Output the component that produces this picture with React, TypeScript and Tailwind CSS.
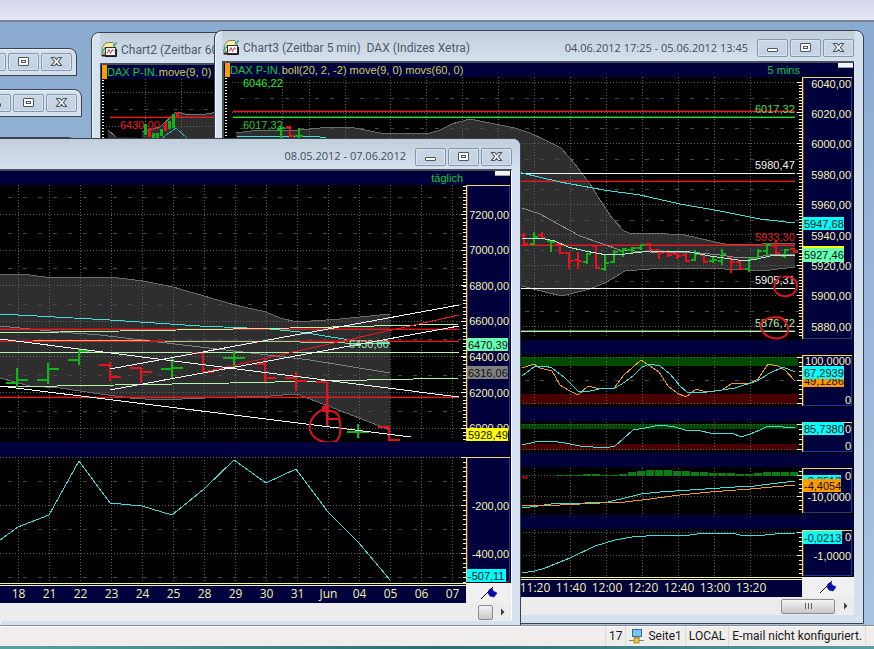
import React from "react";

type Pt = [number, number];
type Bar = { x: number; hi: number; lo: number; open: number; close: number; up?: boolean };
type Label = { y: number; text: string };
type Badge = { y: number; h: number; w: number; fill: string; text: string; ty?: number };

const GREEN = "#10b414";
const RED = "#e8121c";
const CYAN = "#3ee0dc";
const PALE = "#b4f5ac";
const ORANGE = "#f09a2c";
const LEVEL_RED = "#e81820";

const pts = (list: Pt[]) => list.map((p) => p.join(",")).join(" ");
const steps = (from: number, to: number, step: number) => {
  const out: number[] = [];
  for (let v = from; v <= to; v += step) out.push(v);
  return out;
};

function Curve({ data, color, width = 1 }: { data: Pt[]; color: string; width?: number }) {
  return <polyline points={pts(data)} fill="none" stroke={color} strokeWidth={width} shapeRendering="crispEdges" />;
}

/* A level line: one solid row with a faint tint on the row above it. */
function HLine({ y, x1, x2, color }: { y: number; x1: number; x2: number; color: string }) {
  return (
    <g fill={color} shapeRendering="crispEdges">
      <rect x={x1} y={y - 1} width={x2 - x1} height={1} opacity={0.4} />
      <rect x={x1} y={y} width={x2 - x1} height={1} />
    </g>
  );
}

function Grid({ cols, rows, mids = [], x1, x2, y1, y2 }: { cols: number[]; rows: number[]; mids?: number[]; x1: number; x2: number; y1: number; y2: number }) {
  return (
    <g shapeRendering="crispEdges" fill="none">
      {cols.map((x) => (
        <line key={`c${x}`} x1={x + 0.5} x2={x + 0.5} y1={y1} y2={y2} stroke="#606060" strokeDasharray="1 2" />
      ))}
      {rows.map((y) => (
        <line key={`r${y}`} x1={x1} x2={x2} y1={Math.round(y) + 0.5} y2={Math.round(y) + 0.5} stroke="#606060" strokeDasharray="1 2" />
      ))}
      {mids.map((y) => (
        <line key={`m${y}`} x1={x1 + 8} x2={x2} y1={Math.round(y) + 0.5} y2={Math.round(y) + 0.5} stroke="#484848" strokeDasharray="4 11" />
      ))}
    </g>
  );
}

function Ohlc({ bars, arm, width }: { bars: Bar[]; arm: number; width: number }) {
  return (
    <g shapeRendering="crispEdges" fill="none" strokeWidth={width}>
      {bars.map((b) => (
        <path
          key={b.x}
          stroke={b.up ? GREEN : RED}
          d={`M${b.x} ${b.hi}V${b.lo}M${b.x - arm} ${b.open}H${b.x}M${b.x} ${b.close}H${b.x + arm}`}
        />
      ))}
    </g>
  );
}

function Price({ x, y, text, color }: { x: number; y: number; text: string; color: string }) {
  return (
    <text x={x} y={y} fill={color} className="font-['Liberation_Sans',sans-serif] text-[11px]">
      {text}
    </text>
  );
}

function Scale({ x, w, top, bottom, ticks, major, labels, badges = [] }: { x: number; w: number; top: number; bottom: number; ticks: number[]; major: number[]; labels: Label[]; badges?: Badge[] }) {
  return (
    <g>
      <rect x={x} y={top} width={w} height={bottom - top} fill="#00003c" />
      <g fill="#f4f4f4" shapeRendering="crispEdges">
        {ticks.map((t) => (
          <rect key={t} x={x - 3} y={Math.round(t)} width={3} height={1} />
        ))}
        {major.map((t) => (
          <rect key={`M${t}`} x={x - 5} y={Math.round(t)} width={5} height={1} />
        ))}
      </g>
      <rect x={x} y={top} width={1} height={bottom - top} fill="#f4d878" />
      <rect x={x + 1} y={top} width={1} height={bottom - top} fill="#504020" />
      <rect x={x} y={top} width={w - 1} height={1} fill="#f4d878" />
      <path d={`M${x + 1} ${bottom - 0.5}H${x + w - 1.5}V${top + 1}`} fill="none" stroke="#1c3a9c" />
      {labels.map((l) => (
        <text key={l.text + l.y} x={x + w - 2} y={l.y + 4} textAnchor="end" fill="#f8f8b0" className="font-['Liberation_Sans',sans-serif] text-[11px]">
          {l.text}
        </text>
      ))}
      {badges.map((b) => (
        <g key={b.text + b.y}>
          <rect x={x + 1} y={b.y} width={b.w} height={b.h} fill={b.fill} />
          <text x={x + 2} y={b.ty ?? b.y + 11} fill="#101010" className="font-['Liberation_Sans',sans-serif] text-[11px]">
            {b.text}
          </text>
        </g>
      ))}
    </g>
  );
}

function Glyph({ kind }: { kind: "min" | "restore" | "close" }) {
  return (
    <svg width="14" height="12" viewBox="0 0 14 12" aria-hidden="true">
      {kind === "min" && <rect x="1.5" y="6.5" width="10" height="3" rx="0.5" fill="#fff" stroke="#4b5563" />}
      {kind === "restore" && (
        <g stroke="#4b5563" fill="#fff">
          <rect x="1.5" y="1.5" width="10" height="8" rx="0.5" />
          <rect x="4.5" y="4.5" width="4" height="2" />
        </g>
      )}
      {kind === "close" && (
        <path d="M1.500 1.500h3.200L6.500 3.600l1.800-2.100H11.500L8.400 5.500 11.500 9.500H8.300L6.500 7.400 4.700 9.500H1.500L4.600 5.500z" fill="#fff" stroke="#4b5563" strokeWidth="1.100" />
      )}
    </svg>
  );
}

function WinButtons() {
  const item = "flex h-[18px] w-[31px] items-center justify-center rounded-[2px] border border-[#8496b0] bg-linear-to-b from-[#c9d6e4] to-[#c3d1e2] shadow-[inset_0_0_0_1px_#d8e3ee]";
  return (
    <div className="flex shrink-0 gap-[2px]">
      <button type="button" aria-label="Minimieren" className={item}><Glyph kind="min" /></button>
      <button type="button" aria-label="Wiederherstellen" className={item}><Glyph kind="restore" /></button>
      <button type="button" aria-label="Schließen" className={item}><Glyph kind="close" /></button>
    </div>
  );
}

function ChartIcon() {
  return (
    <svg width="16" height="16" viewBox="0 0 16 16" aria-hidden="true" className="shrink-0">
      <path d="M1 6L4 1.500L7 0.500h5l2 3-2 3-7 4-3 1z" fill="#f4f0a0" stroke="#686838" strokeWidth="0.800" />
      <path d="M0 11l4-5 2 2M12 4l4-3.500" fill="none" stroke="#28a8a0" strokeWidth="1.500" />
      <path d="M0 12.500h5v2H1z" fill="#202020" />
      <rect x="4.500" y="5.500" width="10" height="8" fill="#fff" stroke="#303030" />
      <path d="M6 11.500l2-4 1.500 4 2-4 1.500 2" fill="none" stroke="#d04040" />
      <path d="M4 14.500h11.500V7" fill="none" stroke="#181818" />
    </svg>
  );
}

function Pushpin() {
  return (
    <svg width="18" height="14" viewBox="0 0 18 14" aria-hidden="true">
      <path d="M1 13L13 1" stroke="#101010" fill="none" />
      <path d="M9 4l3-2 1 3 4 2-3 4-4-1-2-3z" fill="#0808b8" stroke="#000060" strokeWidth="0.600" />
    </svg>
  );
}

const frame = "absolute flex flex-col overflow-hidden border border-[#39424e] bg-[#d5e1ee] shadow-[inset_1px_1px_0_#eef4fa]";
const titleText = "whitespace-pre font-['Roboto',sans-serif] text-[12px] text-[#4b5a6b]";
const rangeText = "whitespace-pre font-['Open_Sans',sans-serif] text-[11px] text-[#3f4d5e]";

function PaneHeader({ symbol, formula, period, periodGap = "" }: { symbol?: string; formula?: string; period?: string; periodGap?: string }) {
  return (
    <div className="flex h-[14px] items-center bg-[#00003c] font-['Liberation_Sans',sans-serif] text-[11px] leading-[14px] whitespace-pre">
      {symbol && <span className="ml-px h-[14px] w-[5px] shrink-0 bg-[#ff9a00]" />}
      {symbol && <span className="text-[#14c83c]">{symbol}</span>}
      {formula && <span className="ml-px text-[#d0d058]">{formula}</span>}
      {period && (
        <div className="ml-auto flex items-start">
          <span className="text-[#14c83c]">{period}</span>
          <span className={`mr-px h-[5px] w-[15px] border-b border-[#a0a0a0] bg-[#f4f4f4] ${periodGap}`} />
        </div>
      )}
    </div>
  );
}

function TimeAxis({ labels, first, step, axisWidth }: { labels: string[]; first: string; step: string; axisWidth: string }) {
  return (
    <div className="flex h-5 bg-[#f0f0f0]">
      <div className="flex flex-1 flex-col overflow-hidden bg-[#00003c]">
        <div className="h-[3px] shrink-0 border-y border-[#f4f4a0] bg-black" />
        <div className={`flex ${first}`}>
          {labels.map((l) => (
            <span key={l} className={`shrink-0 text-center font-['Open_Sans',sans-serif] text-[12px] leading-[16px] text-[#f4f4b0] ${step}`}>{l}</span>
          ))}
        </div>
      </div>
      <div className={`flex items-center justify-center ${axisWidth}`}><Pushpin /></div>
    </div>
  );
}

function MiniWindow({ place }: { place: string }) {
  return (
    <section className={`${frame} h-[28px] items-end justify-center rounded-tr-lg pr-1 ${place}`}>
      <WinButtons />
    </section>
  );
}

/* ---------- hourly chart ---------- */

function HourlyWindow() {
  const candles: [number, number, number, boolean][] = [
    [144, 124, 135, true], [148, 128, 137, false], [152, 133, 138, true], [156, 133, 138, true], [160, 129, 136, true],
    [164, 122, 131, false], [168, 121, 129, true], [172, 114, 128, true], [176, 112, 117, false],
  ];
  return (
    <section className={`${frame} top-[10px] left-[91px] h-[200px] w-[300px] rounded-t-lg px-2`}>
      <header className="flex h-[30px] shrink-0 items-center gap-1 bg-linear-to-b from-[#c3cedb] to-[#d5e1ee] pt-1 pl-px">
        <ChartIcon />
        <h2 className={titleText}>Chart2 (Zeitbar 60 min)</h2>
      </header>
      <div className="border-t-2 border-l border-[#4a5058]">
        <PaneHeader symbol="DAX P-IN." formula="move(9, 0) movs(60, 0)" />
        <svg width="281" height="100" viewBox="101 79 281 100" className="block bg-black">
          <polygon points="108,130 116,137 142,138 142,132 160,127 176,112 190,115 206,114 230,110 230,160 108,160" fill="#2e2e2e" />
          <Grid cols={[145, 181]} rows={[92, 126]} mids={[109]} x1={106} x2={384} y1={79} y2={179} />
          <Curve data={[[108, 130], [116, 137]]} color="#777" />
          <Curve data={[[142, 132], [160, 127], [176, 112], [190, 115], [206, 114], [230, 110]]} color="#777" />
          <HLine y={117} x1={110} x2={384} color={LEVEL_RED} />
          <Price x={120} y={129} text="6430,00" color={LEVEL_RED} />
          <Curve data={[[162, 138], [176, 128], [187, 138]]} color="#2a9aa0" />
          {candles.map(([x, a, b, up]) => (
            <rect key={x} x={x} y={a} width={3} height={b - a} fill={up ? GREEN : RED} />
          ))}
          {steps(80, 178, 3).map((y) => <rect key={y} x={102} y={y} width={2} height={1} fill="#fff" />)}
        </svg>
      </div>
    </section>
  );
}

/* ---------- 5 minute chart ---------- */

const xCols = [282, 309, 345, 390, 426, 462, 498, 534, 570, 606, 642, 678, 714, 750];

const minuteUpper: Pt[] = [[236, 133], [258, 130], [300, 130], [330, 127], [350, 127], [380, 133], [430, 133], [440, 130], [452, 124], [470, 119], [490, 123], [515, 128], [530, 133], [545, 140], [561, 148], [575, 164], [590, 184], [600, 200], [612, 218], [624, 231], [632, 234], [650, 233], [685, 235], [715, 242], [730, 245], [795, 243]];
const minuteLower: Pt[] = [[795, 267], [770, 270], [750, 270], [700, 268], [650, 269], [625, 271], [607, 282], [590, 289], [562, 296], [545, 292], [522, 286], [236, 250]];

const minuteBars: Bar[] = [
  { x: 524, hi: 233, lo: 245, open: 235, close: 244 },
  { x: 534, hi: 232, lo: 245, open: 244, close: 237, up: true },
  { x: 542, hi: 232, lo: 239, open: 235, close: 238 },
  { x: 551, hi: 240, lo: 252, open: 241, close: 242, up: true },
  { x: 560, hi: 243, lo: 254, open: 244, close: 253 },
  { x: 569, hi: 252, lo: 269, open: 253, close: 261 },
  { x: 578, hi: 252, lo: 269, open: 260, close: 261 },
  { x: 587, hi: 253, lo: 264, open: 262, close: 254, up: true },
  { x: 596, hi: 245, lo: 269, open: 246, close: 268 },
  { x: 605, hi: 255, lo: 271, open: 269, close: 263, up: true },
  { x: 614, hi: 250, lo: 263, open: 262, close: 252, up: true },
  { x: 623, hi: 248, lo: 257, open: 251, close: 249, up: true },
  { x: 632, hi: 247, lo: 254, open: 250, close: 248, up: true },
  { x: 641, hi: 244, lo: 250, open: 248, close: 245, up: true },
  { x: 650, hi: 243, lo: 251, open: 244, close: 250 },
  { x: 659, hi: 249, lo: 259, open: 250, close: 253 },
  { x: 668, hi: 250, lo: 257, open: 252, close: 255 },
  { x: 677, hi: 252, lo: 259, open: 254, close: 256 },
  { x: 686, hi: 253, lo: 262, open: 255, close: 261 },
  { x: 695, hi: 250, lo: 261, open: 260, close: 254, up: true },
  { x: 704, hi: 254, lo: 263, open: 255, close: 262 },
  { x: 713, hi: 256, lo: 263, open: 261, close: 260, up: true },
  { x: 722, hi: 249, lo: 265, open: 261, close: 254, up: true },
  { x: 731, hi: 257, lo: 273, open: 258, close: 262 },
  { x: 740, hi: 260, lo: 270, open: 262, close: 269 },
  { x: 749, hi: 257, lo: 272, open: 269, close: 259, up: true },
  { x: 758, hi: 249, lo: 259, open: 258, close: 251, up: true },
  { x: 767, hi: 243, lo: 257, open: 251, close: 245, up: true },
  { x: 776, hi: 240, lo: 254, open: 246, close: 253 },
  { x: 785, hi: 249, lo: 258, open: 256, close: 250, up: true },
  { x: 794, hi: 248, lo: 253, open: 249, close: 252 },
];

const histogram = [475, 475, 475, 474, 474, 475, 475, 474, 472, 471, 470, 470, 470, 471, 471, 472, 472, 473, 473, 473, 474, 474, 473, 472, 472, 472, 472];

function Gap() {
  return <div className="h-[14px] bg-[#00003c]" />;
}

function MinuteWindow() {
  return (
    <section className={`${frame} top-[8px] left-[214px] h-[594px] w-[650px] rounded-t-lg pr-2 pl-[7px]`}>
      <header className="flex h-[30px] shrink-0 items-center bg-linear-to-b from-[#c3cedb] to-[#d5e1ee] px-px pt-1">
        <ChartIcon />
        <h2 className={`ml-1 ${titleText}`}>Chart3 (Zeitbar 5 min)  DAX (Indizes Xetra)</h2>
        <span className={`mr-[9px] ml-auto ${rangeText}`}>04.06.2012 17:25 - 05.06.2012 13:45</span>
        <WinButtons />
      </header>
      <div className="mr-px border-t-2 border-l-2 border-[#4a5058]">
        <PaneHeader symbol="DAX P-IN." formula="boll(20, 2, -2) move(9, 0) movs(60, 0)" period="5 mins" periodGap="ml-[38px]" />
        <svg viewBox="224 77 630 263" className="block w-full bg-black">
          <polygon points={pts([...minuteUpper, ...minuteLower])} fill="#2e2e2e" />
          <Grid cols={xCols} rows={steps(82, 330, 30.45)} mids={steps(98, 330, 30.45)} x1={232} x2={800} y1={77} y2={338} />
          <Curve data={minuteUpper} color="#6c6c6c" />
          <Curve data={minuteLower} color="#6c6c6c" />
          <HLine y={111} x1={233} x2={795} color={LEVEL_RED} />
          <HLine y={117} x1={233} x2={795} color="#28e032" />
          <rect x={233} y={173} width={562} height={1} fill="#f4f4f4" />
          <HLine y={181} x1={233} x2={795} color={LEVEL_RED} />
          <HLine y={245} x1={233} x2={795} color={LEVEL_RED} />
          <rect x={233} y={288} width={562} height={1} fill="#ffffff" />
          <HLine y={331} x1={233} x2={795} color={PALE} />
          <Curve data={[[236, 136], [320, 137], [522, 173], [560, 182], [604, 190], [640, 195], [680, 204], [720, 211], [760, 219], [795, 223]]} color={CYAN} />
          <Curve data={[[522, 208], [540, 214], [560, 225], [580, 236], [600, 243], [620, 250], [650, 252], [690, 252], [720, 255], [740, 258], [757, 257], [775, 254], [795, 254]]} color="#8c8c8c" />
          <Ohlc bars={minuteBars} arm={4} width={2} />
          <Curve data={[[522, 239], [540, 238], [555, 241], [568, 247], [585, 251], [607, 255], [625, 254], [650, 251], [690, 252], [710, 256], [745, 261], [757, 259], [770, 256], [795, 255]]} color="#a8f0d0" />
          <Ohlc bars={[{ x: 281, hi: 126, lo: 138, open: 130, close: 128, up: true }, { x: 290, hi: 126, lo: 137, open: 127, close: 136 }, { x: 299, hi: 128, lo: 138, open: 136, close: 136, up: true }]} arm={4} width={2} />
          <Price x={243} y={87} text="6046,22" color="#28e832" />
          <Price x={243} y={129} text="6017,32" color="#28c832" />
          <Price x={755} y={113} text="6017,32" color="#5cdc50" />
          <Price x={755} y={169} text="5980,47" color="#f4f4f4" />
          <Price x={755} y={241} text="5933,30" color={LEVEL_RED} />
          <Price x={755} y={284} text="5905,31" color="#f4f4f4" />
          <Price x={755} y={327} text="5876,72" color={PALE} />
          <path d="M781 276C775 280 771 289 778 294C785 299 797 295 797 286C797 279 790 275 783 277" fill="none" stroke="#e01420" strokeWidth="2" />
          <path d="M784 319C774 315 758 319 761 328C764 338 778 341 785 336C791 331 788 320 778 317" fill="none" stroke="#e01420" strokeWidth="2" />
          {steps(78, 336, 3).map((y) => <rect key={y} x={225} y={y} width={2} height={1} fill="#fff" />)}
          <Scale
            x={802} w={51} top={77} bottom={339}
            ticks={steps(82, 336, 3.045)} major={steps(82, 330, 30.45)}
            labels={["6040,00", "6020,00", "6000,00", "5980,00", "5960,00", "5940,00", "5920,00", "5900,00", "5880,00"].map((text, i) => ({ text, y: Math.round(83.5 + i * 30.4) }))}
            badges={[
              { y: 217, h: 13, w: 41, fill: "#00ffff", text: "5947,68" },
              { y: 246, h: 3, w: 41, fill: "#ffff00", text: "" },
              { y: 248, h: 14, w: 41, fill: "#66ffb2", text: "5927,46", ty: 259 },
            ]}
          />
        </svg>
        <Gap />
        <svg viewBox="224 354 630 53" className="block w-full bg-black">
          <rect x="224" y="357" width="574" height="9" fill="#004a00" />
          <rect x="224" y="394" width="574" height="10" fill="#4a0000" />
          <Grid cols={xCols} rows={[357, 403]} mids={[380]} x1={232} x2={800} y1={355} y2={406} />
          <Curve color={ORANGE} data={[[522, 368], [534, 364], [540, 368], [552, 371], [560, 385], [568, 390], [578, 395], [588, 386], [600, 389], [614, 388], [624, 375], [641, 360], [650, 366], [659, 372], [668, 386], [677, 393], [686, 397], [696, 389], [706, 392], [722, 390], [731, 384], [750, 383], [758, 379], [768, 364], [778, 366], [785, 370], [795, 381]]} />
          <Curve color={CYAN} data={[[522, 376], [534, 367], [545, 366], [552, 368], [565, 378], [578, 391], [590, 391], [604, 388], [615, 388], [625, 382], [633, 376], [642, 367], [650, 364], [660, 366], [670, 374], [680, 386], [687, 392], [700, 393], [722, 390], [735, 388], [757, 381], [770, 373], [783, 367], [795, 372]]} />
          <Scale x={802} w={51} top={355} bottom={406} ticks={steps(357, 404, 4.6)} major={[357, 380, 403]}
            labels={[{ y: 361, text: "100,0000" }, { y: 400, text: "0" }]}
            badges={[{ y: 376, h: 11, w: 41, fill: "#ff9a00", text: "49,1286", ty: 385 }, { y: 366, h: 13, w: 41, fill: "#00ffff", text: "67,2939" }]} />
        </svg>
        <Gap />
        <svg viewBox="224 421 630 32" className="block w-full bg-black">
          <rect x="224" y="424" width="574" height="5" fill="#004a00" />
          <rect x="224" y="444" width="574" height="6" fill="#4a0000" />
          <Grid cols={xCols} rows={[424, 449]} x1={232} x2={800} y1={422} y2={452} />
          <Curve color={CYAN} data={[[522, 445], [535, 442], [550, 441], [565, 443], [580, 446], [605, 448], [615, 446], [633, 430], [645, 428], [660, 425], [675, 427], [685, 430], [697, 430], [714, 434], [725, 433], [732, 433], [741, 437], [750, 434], [760, 430], [768, 426], [783, 427], [795, 428]]} />
          <Scale x={802} w={51} top={422} bottom={452} ticks={steps(424, 450, 5)} major={[424, 449]}
            labels={[{ y: 429, text: "0" }, { y: 446, text: "0" }]}
            badges={[{ y: 422, h: 13, w: 41, fill: "#00ffff", text: "85,7380" }]} />
        </svg>
        <Gap />
        <svg viewBox="224 467 630 48" className="block w-full bg-black">
          <Grid cols={xCols} rows={[475, 496]} x1={232} x2={800} y1={468} y2={514} />
          <rect x="522" y="476" width="6" height="3" fill="#7c0808" />
          {histogram.map((y, i) => (
            <rect key={i} x={556 + i * 9} y={y} width={8} height={476 - y} fill="#0c7c14" />
          ))}
          <Curve color={CYAN} data={[[522, 508], [538, 506], [557, 503], [580, 504], [590, 502], [605, 503], [612, 501], [625, 498], [641, 494], [660, 492], [690, 490], [735, 487], [755, 486], [770, 484], [795, 481]]} />
          <Curve color={ORANGE} data={[[522, 505], [560, 505], [600, 503], [625, 502], [650, 499], [680, 495], [710, 492], [750, 489], [795, 485]]} />
          <Scale x={802} w={51} top={468} bottom={513} ticks={steps(471, 512, 4.2)} major={[475, 496]}
            labels={[{ y: 476, text: "0" }, { y: 497, text: "-10,0000" }]}
            badges={[{ y: 475, h: 12, w: 38, fill: "#00ffff", text: "-3,8518", ty: 485 }, { y: 479, h: 13, w: 38, fill: "#ff9a00", text: "-4,4054", ty: 490 }]} />
        </svg>
        <Gap />
        <svg viewBox="224 529 630 48" className="block w-full bg-black">
          <Grid cols={xCols} rows={[532, 555]} x1={232} x2={800} y1={530} y2={577} />
          <Curve color={CYAN} data={[[522, 573], [535, 571], [545, 568], [570, 558], [595, 546], [615, 540], [632, 537], [660, 535], [690, 535], [705, 533], [715, 534], [722, 533], [732, 533], [740, 535], [765, 535], [785, 533], [795, 533]]} />
          <Scale x={802} w={51} top={530} bottom={576} ticks={steps(532, 576, 4.6)} major={[532, 555]}
            labels={[{ y: 537, text: "0" }, { y: 556, text: "-1,0000" }]}
            badges={[{ y: 531, h: 13, w: 39, fill: "#00ffff", text: "-0,0213" }]} />
        </svg>
        <TimeAxis labels={["11:20", "11:40", "12:00", "12:20", "12:40", "13:00", "13:20"]} first="pl-[293px]" step="w-[36px]" axisWidth="w-[52px]" />
        <div className="flex h-[18px] items-center justify-end bg-[#ececec] pr-[6px]">
          <button type="button" aria-label="Zeitachse verschieben" className="flex h-[15px] w-[54px] items-center justify-center gap-[2px] rounded-[2px] border border-[#8c8c8c] bg-linear-to-b from-[#f4f4f4] to-[#c8c8c8]">
            <span className="h-[6px] w-px bg-[#606060]" /><span className="h-[6px] w-px bg-[#606060]" /><span className="h-[6px] w-px bg-[#606060]" />
          </button>
          <button type="button" aria-label="Nach rechts" className="ml-[8px] text-[#404040]"><svg width="5" height="8" viewBox="0 0 5 8"><path d="M1 0.500v7l3.500-3.500z" fill="currentColor" /></svg></button>
        </div>
      </div>
    </section>
  );
}

/* ---------- daily chart ---------- */

const dayCols = steps(18, 460, 31);
const dayUpper: Pt[] = [[0, 275], [10, 274], [22, 274], [45, 277], [110, 277], [143, 281], [173, 287], [204, 296], [235, 305], [266, 312], [280, 318], [297, 322], [340, 319], [390, 314]];
const dayLower: Pt[] = [[390, 430], [297, 394], [270, 396], [205, 398], [160, 400], [130, 398], [100, 394], [60, 388], [30, 386], [0, 378]];
const dayBars: Bar[] = [
  { x: 17, hi: 368, lo: 387, open: 383, close: 380, up: true },
  { x: 48, hi: 363, lo: 384, open: 380, close: 369, up: true },
  { x: 79, hi: 349, lo: 365, open: 360, close: 351, up: true },
  { x: 110, hi: 362, lo: 381, open: 365, close: 377 },
  { x: 141, hi: 367, lo: 383, open: 368, close: 372 },
  { x: 172, hi: 357, lo: 378, open: 369, close: 368, up: true },
  { x: 203, hi: 353, lo: 372, open: 353, close: 372 },
  { x: 234, hi: 351, lo: 368, open: 358, close: 358, up: true },
  { x: 265, hi: 358, lo: 382, open: 364, close: 378 },
  { x: 296, hi: 372, lo: 391, open: 378, close: 381 },
  { x: 327, hi: 382, lo: 426, open: 382, close: 419 },
  { x: 358, hi: 424, lo: 438, open: 432, close: 432, up: true },
  { x: 389, hi: 426, lo: 441, open: 427, close: 440 },
];

function DailyWindow() {
  return (
    <section className={`${frame} top-[116px] -left-px h-[488px] w-[522px] rounded-tr-lg`}>
      <header className="flex h-[30px] shrink-0 items-center justify-end bg-linear-to-b from-[#c3cedb] to-[#d5e1ee] pt-[5px] pr-2">
        <span className={`mr-[9px] ${rangeText}`}>08.05.2012 - 07.06.2012</span>
        <WinButtons />
      </header>
      <div className="mr-2 border-t-2 border-r border-t-[#4a5058] border-r-white">
        <PaneHeader period="täglich" periodGap="ml-[32px]" />
        <svg viewBox="0 185 511 257" className="block w-full bg-black">
          <polygon points={pts([...dayUpper, ...dayLower])} fill="#2e2e2e" />
          <Grid cols={dayCols} rows={steps(214, 430, 35.6)} mids={steps(197, 415, 35.6)} x1={0} x2={464} y1={185} y2={440} />
          <Curve data={dayUpper} color="#6c6c6c" />
          <Curve data={dayLower} color="#6c6c6c" />
          <Curve data={[[0, 326], [60, 332], [100, 335], [150, 341], [200, 347], [260, 354], [310, 360], [390, 373]]} color="#808080" />
          <HLine y={329} x1={0} x2={459} color={LEVEL_RED} />
          <Curve data={[[0, 314], [110, 320], [200, 326], [270, 329], [300, 332], [350, 340], [390, 343]]} color={CYAN} />
          <Curve data={[[0, 333], [120, 331], [290, 328], [459, 324]]} color={PALE} />
          <HLine y={341} x1={0} x2={459} color={LEVEL_RED} />
          <rect x={33} y={340} width={117} height={1} fill="#e8a868" />
          <Curve data={[[165, 341], [300, 342], [390, 344]]} color="#84e0a0" />
          <rect x={0} y={352} width={459} height={1} fill={PALE} />
          <Curve data={[[0, 387], [230, 383], [459, 378]]} color={PALE} />
          <HLine y={397} x1={0} x2={459} color={LEVEL_RED} />
          <Ohlc bars={dayBars} arm={11} width={2} />
          <Curve data={[[204, 372], [459, 315]]} color={LEVEL_RED} />
          <Curve data={[[0, 339], [459, 397]]} color="#ffffff" />
          <Curve data={[[110, 369], [459, 305]]} color="#ffffff" />
          <Curve data={[[110, 390], [459, 326]]} color="#ffffff" />
          <Curve data={[[0, 386], [411, 437]]} color="#ffffff" />
          <Price x={349} y={348} text="6430,60" color="#90f0b8" />
          <path d="M323 407h5v4h-5zM328 408C318 409 308 420 310 430C313 440 325 444 334 442C342 440 341 425 339 417C337 411 331 410 326 412" fill="none" stroke="#e01420" strokeWidth="2" />
          <Scale
            x={466} w={45} top={185} bottom={441}
            ticks={steps(186, 440, 3.56)} major={steps(214, 430, 35.6)}
            labels={["7200,00", "7000,00", "6800,00", "6600,00", "6400,00", "6200,00", "6000,00"].map((text, i) => ({ text, y: Math.round(214.500 + i * 35.6) }))}
            badges={[
              { y: 338, h: 13, w: 41, fill: "#66ffb2", text: "6470,39" },
              { y: 366, h: 13, w: 41, fill: "#808080", text: "6316,06" },
              { y: 428, h: 13, w: 41, fill: "#ffff00", text: "5928,49" },
            ]}
          />
        </svg>
        <div className="h-[15px] bg-[#00003c]" />
        <svg viewBox="0 457 511 126" className="block w-full bg-black">
          <Grid cols={dayCols} rows={[457, 505, 553]} mids={[481, 529, 577]} x1={0} x2={464} y1={457} y2={583} />
          <Curve color={CYAN} data={[[0, 540], [18, 527], [49, 515], [79, 461], [110, 503], [142, 506], [172, 515], [204, 489], [234, 460], [266, 483], [296, 469], [328, 512], [359, 543], [390, 580]]} />
          <Scale x={466} w={45} top={457} bottom={582} ticks={steps(457, 582, 4.8)} major={[457, 505, 553]}
            labels={[{ y: 506, text: "-200,00" }, { y: 554, text: "-400,00" }]}
            badges={[{ y: 569, h: 13, w: 39, fill: "#00ffff", text: "-507,11" }]} />
        </svg>
        <TimeAxis labels={["18", "21", "22", "23", "24", "25", "28", "29", "30", "31", "Jun", "04", "05", "06", "07"]} first="pl-[3px]" step="w-[31px]" axisWidth="w-[45px]" />
        <div className="flex h-[18px] items-center justify-end bg-[#ececec] pr-[6px]">
          <button type="button" aria-label="Zeitachse verschieben" className="size-[15px] rounded-[2px] border border-[#8c8c8c] bg-linear-to-b from-[#f4f4f4] to-[#c8c8c8]" />
          <button type="button" aria-label="Nach rechts" className="ml-[7px] text-[#404040]"><svg width="5" height="8" viewBox="0 0 5 8"><path d="M1 0.500v7l3.500-3.500z" fill="currentColor" /></svg></button>
        </div>
      </div>
    </section>
  );
}

function StatusBar() {
  const cell = "flex items-center border-r border-[#dcdcdc] px-[3px]";
  return (
    <footer className="flex h-[21px] shrink-0 items-stretch justify-end border-t border-[#8c8c8c] bg-[#f0eded] pr-2 font-['Roboto',sans-serif] text-[12px] whitespace-nowrap text-[#181818] shadow-[inset_0_1px_0_#fff]">
      <span className={`${cell} border-l`}>17</span>
      <span className={`${cell} gap-1`}>
        <svg width="15" height="15" viewBox="0 0 15 15" aria-hidden="true">
          <rect x="3.500" y="0.500" width="9" height="7" fill="#7cc4f0" stroke="#2c6ca8" />
          <path d="M6 8h4v2H6zM0 11.500h15" fill="#a0b4c4" stroke="#708898" />
          <rect x="5" y="9" width="5" height="5" fill="#e8c830" stroke="#a08018" strokeWidth="0.800" />
        </svg>
        Seite1
      </span>
      <span className={cell}>LOCAL</span>
      <span className={cell}>E-mail nicht konfiguriert.</span>
    </footer>
  );
}

export default function App() {
  return (
    <div className="flex h-screen flex-col overflow-hidden bg-[#8aabd0]">
      <div className="h-[22px] shrink-0 border-b-2 border-[#7c8490] bg-linear-to-b from-[#d2d7ec] to-[#e6e9f6]" />
      <main className="relative flex-1 overflow-hidden bg-linear-to-b from-[#8aabd0] to-[#a8c2e2]">
        <MiniWindow place="top-[26px] -left-[60px] w-[137px]" />
        <MiniWindow place="top-[67px] -left-[60px] w-[142px]" />
        <div className="absolute top-[115px] -left-2 h-4 w-[84px] rounded-tr-lg border border-[#39424e] bg-[#c3cedb]" />
        <HourlyWindow />
        <MinuteWindow />
        <DailyWindow />
      </main>
      <StatusBar />
      <div className="h-[3px] shrink-0 bg-linear-to-r from-[#5ca0a4] via-[#2f6a74] to-[#5c9ca4]" />
    </div>
  );
}
